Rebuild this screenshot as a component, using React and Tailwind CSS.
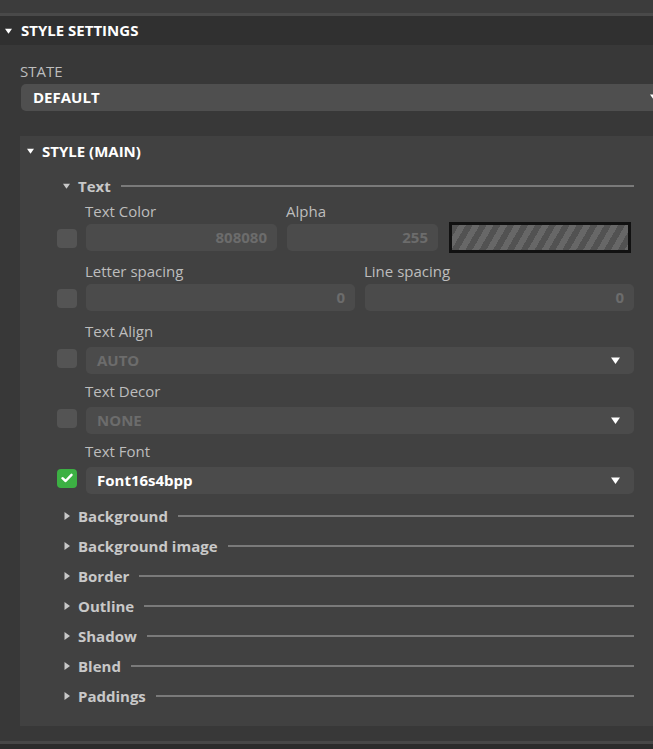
import React from 'react';

const DownTri = ({ className = '' }) => (
  <svg width="9" height="7" viewBox="0 0 9 7" className={className}>
    <path d="M0 0.5 L9 0.5 L4.5 7 Z" fill="currentColor" />
  </svg>
);

const RightTri = () => (
  <svg width="6" height="8" viewBox="0 0 6 8" className="text-[#c8c8c8]">
    <path d="M0.5 0 L6 4 L0.5 8 Z" fill="currentColor" />
  </svg>
);

const Checkbox = ({ checked }) =>
  checked ? (
    <div className="w-[20px] h-[19px] rounded-[4px] bg-[#3cb043] flex items-center justify-center shrink-0">
      <svg width="12" height="10" viewBox="0 0 12 10">
        <path d="M1.5 5.2 L4.6 8 L10.5 1.8" stroke="#fff" strokeWidth="2.4" fill="none" strokeLinecap="round" strokeLinejoin="round" />
      </svg>
    </div>
  ) : (
    <div className="w-[20px] h-[19px] rounded-[4px] bg-[#545454] shrink-0" />
  );

const NumInput = ({ value, width }) => (
  <div
    className="h-[27px] rounded-[5px] bg-[#4b4b4b] flex items-center justify-end pr-[10px] text-[15px] font-bold text-[#6c6c6c]"
    style={{ width }}
  >
    {value}
  </div>
);

const Select = ({ value, active }) => (
  <div className="h-[27px] flex-1 rounded-[5px] bg-[#4b4b4b] flex items-center justify-between pl-[11px] pr-[14px]">
    <span className={`text-[15px] font-bold ${active ? 'text-white' : 'text-[#6c6c6c]'}`}>{value}</span>
    <DownTri className="text-white" />
  </div>
);

const Label = ({ children, className = '' }) => (
  <div className={`h-[20px] leading-[20px] text-[15px] text-[#bdbdbd] ${className}`}>{children}</div>
);

const SectionHead = ({ title, open }) => (
  <div className="h-[30px] flex items-center pl-[6px]">
    <div className="w-[7px] flex justify-center">
      {open ? <DownTri className="text-[#c8c8c8] w-[7px] h-[6px]" /> : <RightTri />}
    </div>
    <span className="ml-[8px] text-[15px] font-bold text-[#c8c8c8]">{title}</span>
    <div className="flex-1 ml-[10px] h-[2px] bg-[#7a7a7a]" />
  </div>
);

const SelectRow = ({ label, value, active }) => (
  <div>
    <Label className="ml-[28px]">{label}</Label>
    <div className="flex items-center gap-[9px] mt-[6px]">
      <div className="-mt-[5px]">
        <Checkbox checked={active} />
      </div>
      <Select value={value} active={active} />
    </div>
  </div>
);

export default function App() {
  const collapsed = ['Background', 'Background image', 'Border', 'Outline', 'Shadow', 'Blend', 'Paddings'];

  return (
    <div className="w-[653px] h-[749px] overflow-hidden bg-[#383838] font-['Open_Sans',sans-serif] flex flex-col">
      <div className="h-[13px] bg-[#3c3c3c] shrink-0" />
      <div className="h-[3px] bg-[#494949] shrink-0" />
      <div className="h-[29px] bg-[#303030] flex items-center pl-[5px] shrink-0">
        <DownTri className="text-white w-[7px] h-[6px]" />
        <span className="ml-[9px] text-[15px] font-bold text-white">STYLE SETTINGS</span>
      </div>

      <div className="pl-[20px] pt-[16px] w-[680px]">
        <Label className="text-[#b4b4b4]">STATE</Label>
        <div className="mt-[3px] ml-[1px] h-[27px] w-[640px] rounded-[5px] bg-[#4f4f4f] flex items-center justify-between pl-[12px] pr-[2px]">
          <span className="text-[15px] font-bold text-white">DEFAULT</span>
          <DownTri className="text-white" />
        </div>

        <div className="mt-[25px] h-[590px] bg-[#414141]">
          <div className="h-[30px] flex items-center pl-[7px]">
            <DownTri className="text-white w-[7px] h-[6px]" />
            <span className="ml-[8px] text-[15px] font-bold text-white">STYLE (MAIN)</span>
          </div>

          <div className="ml-[37px] w-[577px]">
            <div className="mt-[5px]">
              <SectionHead title="Text" open />
            </div>

            <div className="flex gap-[10px] ml-[28px]">
              <Label className="w-[191px]">Text Color</Label>
              <Label>Alpha</Label>
            </div>
            <div className="flex items-center h-[27px] mt-[3px]">
              <div className="mt-[1px]">
                <Checkbox />
              </div>
              <div className="ml-[9px]">
                <NumInput value="808080" width="191px" />
              </div>
              <div className="ml-[10px]">
                <NumInput value="255" width="151px" />
              </div>
              <div className="ml-[11px] shrink-0 w-[182px] h-[31px] border-[3px] border-[#111111] bg-[repeating-linear-gradient(120deg,#525252_0px,#525252_6px,#676767_6px,#676767_12px)]" />
            </div>

            <div className="flex gap-[10px] ml-[28px] mt-[10px]">
              <Label className="w-[269px]">Letter spacing</Label>
              <Label>Line spacing</Label>
            </div>
            <div className="flex items-center mt-[3px]">
              <div className="mt-[1px]">
                <Checkbox />
              </div>
              <div className="ml-[9px]">
                <NumInput value="0" width="269px" />
              </div>
              <div className="ml-[10px]">
                <NumInput value="0" width="269px" />
              </div>
            </div>

            <div className="mt-[10px]">
              <SelectRow label="Text Align" value="AUTO" />
            </div>
            <div className="mt-[7px]">
              <SelectRow label="Text Decor" value="NONE" />
            </div>
            <div className="mt-[7px]">
              <SelectRow label="Text Font" value="Font16s4bpp" active />
            </div>

            <div className="mt-[7px]">
              {collapsed.map((t) => (
                <SectionHead key={t} title={t} />
              ))}
            </div>
          </div>
        </div>
      </div>

      <div className="mt-[15px] h-[3px] bg-[#474747] shrink-0" />
      <div className="flex-1 bg-[#2b2b2b]" />
    </div>
  );
}
